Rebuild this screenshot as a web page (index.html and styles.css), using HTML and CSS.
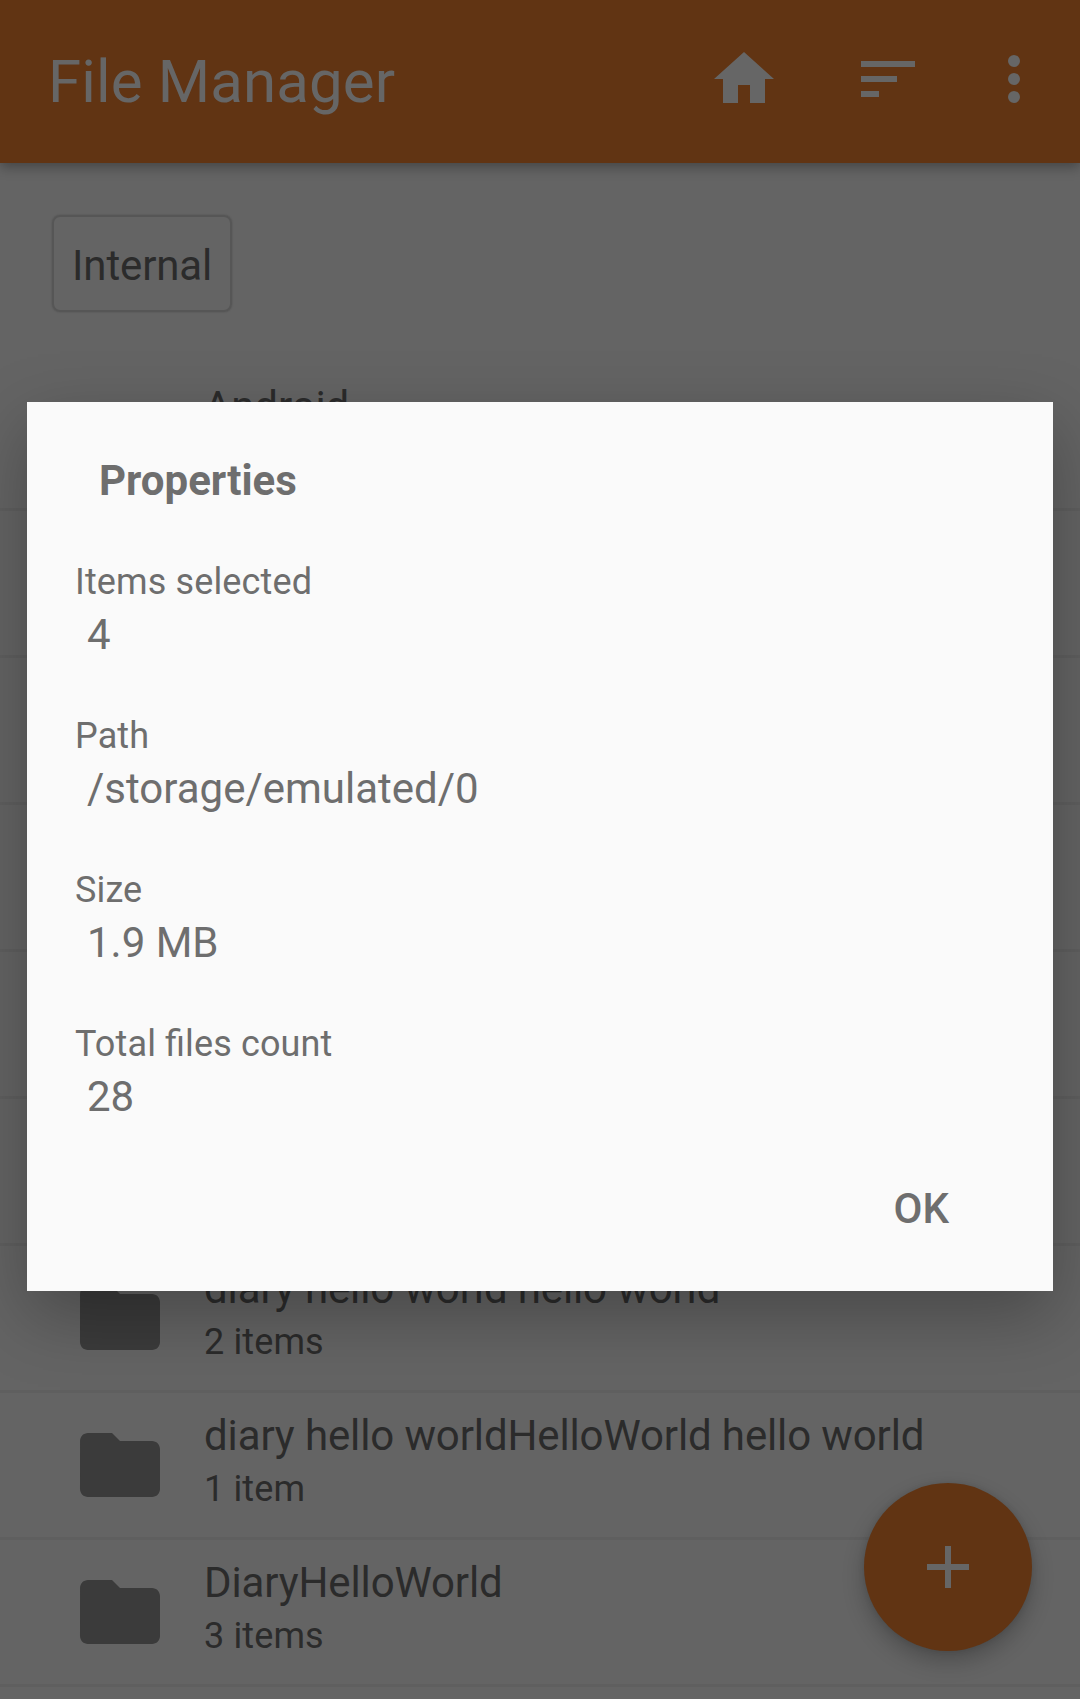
FILE: index.html
```html
<!DOCTYPE html>
<html lang="en">
<head>
<meta charset="utf-8">
<title>File Manager</title>
<link rel="stylesheet" href="styles.css">
</head>
<body>
<div class="screen">
  <header class="toolbar">
    <h1 class="toolbar-title">File Manager</h1>
    <svg class="icon home" viewBox="0 0 24 24"><path d="M10 20v-6h4v6h5v-8h3L12 3 2 12h3v8z"/></svg>
    <svg class="icon sort" viewBox="0 0 24 24"><path d="M3 18h6v-2H3v2zM3 6v2h18V6H3zm0 7h12v-2H3v2z"/></svg>
    <svg class="icon more" viewBox="0 0 24 24"><circle cx="12" cy="6" r="2"/><circle cx="12" cy="12" r="2"/><circle cx="12" cy="18" r="2"/></svg>
  </header>
  <nav class="path-bar"><span class="chip">Internal</span></nav>
  <ul class="files">
    <li class="file"><svg class="folder" viewBox="0 0 24 24"></svg><div class="info"><div class="name">Android</div></div></li>
    <li class="file"></li>
    <li class="file"></li>
    <li class="file"></li>
    <li class="file"></li>
    <li class="file"></li>
    <li class="file"><svg class="folder" viewBox="0 0 24 24"><path d="M10 4H4c-1.100 0-1.990.9-1.990 2L2 18c0 1.100.9 2 2 2h16c1.100 0 2-.9 2-2V8c0-1.100-.9-2-2-2h-8l-2-2z"/></svg><div class="info"><div class="name">diary hello world hello world</div><div class="count">2 items</div></div></li>
    <li class="file"><svg class="folder" viewBox="0 0 24 24"><path d="M10 4H4c-1.100 0-1.990.9-1.990 2L2 18c0 1.100.9 2 2 2h16c1.100 0 2-.9 2-2V8c0-1.100-.9-2-2-2h-8l-2-2z"/></svg><div class="info"><div class="name">diary hello worldHelloWorld hello world</div><div class="count">1 item</div></div></li>
    <li class="file"><svg class="folder" viewBox="0 0 24 24"><path d="M10 4H4c-1.100 0-1.990.9-1.990 2L2 18c0 1.100.9 2 2 2h16c1.100 0 2-.9 2-2V8c0-1.100-.9-2-2-2h-8l-2-2z"/></svg><div class="info"><div class="name">DiaryHelloWorld</div><div class="count">3 items</div></div></li>
  </ul>
  <button class="fab" aria-label="Add"><svg class="plus" viewBox="0 0 24 24"><path d="M19 13h-6v6h-2v-6H5v-2h6V5h2v6h6v2z"/></svg></button>
  <section class="dialog" role="dialog">
    <h2 class="dialog-title">Properties</h2>
    <dl class="props">
      <div class="prop"><dt>Items selected</dt><dd>4</dd></div>
      <div class="prop"><dt>Path</dt><dd>/storage/emulated/0</dd></div>
      <div class="prop"><dt>Size</dt><dd>1.9 MB</dd></div>
      <div class="prop"><dt>Total <span class="lig">fi</span>les count</dt><dd>28</dd></div>
    </dl>
    <button class="ok">OK</button>
  </section>
</div>
</body>
</html>
```
FILE: styles.css
```css
* { box-sizing: border-box; margin: 0; padding: 0; }

body { font-family: Roboto, sans-serif; background: #646464; }

button { border: 0; background: none; font: inherit; }

.screen {
  position: relative;
  width: 1080px;
  height: 1699px;
  overflow: hidden;
  background: #646464;
  color: #2b2b2b;
}

.toolbar {
  display: flex;
  align-items: center;
  height: 163px;
  padding: 0 30px 5px 48px;
  background: #613413;
  color: #666;
  box-shadow: 0 4px 12px rgba(0, 0, 0, .32);
}

.toolbar-title {
  flex: 1;
  font-size: 60px;
  font-weight: 400;
  line-height: 70px;
  letter-spacing: .13px;
  padding-top: 5px;
}

.icon { width: 72px; height: 72px; fill: #666; }
.home { margin-right: 72px; }
.sort { margin-right: 54px; }

.path-bar { height: 201px; padding: 52px 0 0 52px; }

.chip {
  display: block;
  width: 180px;
  height: 97px;
  padding: 24px 0 0 18px;
  border: 2px solid #565656;
  border-radius: 8px;
  box-shadow: 0 0 2px rgba(0, 0, 0, .2);
  font-size: 42px;
  line-height: 50px;
  letter-spacing: -.12px;
}

.files { list-style: none; }

.file {
  display: flex;
  align-items: center;
  gap: 36px;
  height: 147px;
  padding-left: 72px;
  border-bottom: 3px solid #5f5f5f;
}

.folder { width: 96px; height: 96px; fill: #3b3b3b; }

.info { height: 108px; }
.name { font-size: 42px; line-height: 50px; letter-spacing: -.12px; }
.count { font-size: 36px; line-height: 50px; letter-spacing: .12px; padding-top: 3px; }

.fab {
  position: absolute;
  right: 48px;
  bottom: 48px;
  display: flex;
  align-items: center;
  justify-content: center;
  width: 168px;
  height: 168px;
  border-radius: 50%;
  background: #613413;
  box-shadow: 0 10px 22px rgba(0, 0, 0, .24), 0 0 6px rgba(0, 0, 0, .1);
}

.plus { width: 72px; height: 72px; fill: #666; }

.dialog {
  position: absolute;
  left: 27px;
  top: 402px;
  display: flex;
  flex-direction: column;
  width: 1026px;
  height: 889px;
  padding: 54px 48px 0;
  background: #fafafa;
  color: #6e6e6e;
  box-shadow: 0 24px 66px rgba(0, 0, 0, .28);
}

.dialog-title { padding-left: 24px; font-size: 42px; line-height: 50px; font-weight: 700; }

.props { padding-top: 54px; }
.prop { height: 154px; }
.prop dt { font-size: 36px; line-height: 44px; letter-spacing: .13px; }
.prop dd { padding: 6px 0 0 12px; font-size: 42px; line-height: 50px; }

/* tracking switches ligatures off, so the joined pair is set without it */
.lig { letter-spacing: 0; }

.ok { align-self: flex-end; margin: 8px 56px 0 0; font-size: 42px; line-height: 50px; font-weight: 500; color: inherit; }
```
